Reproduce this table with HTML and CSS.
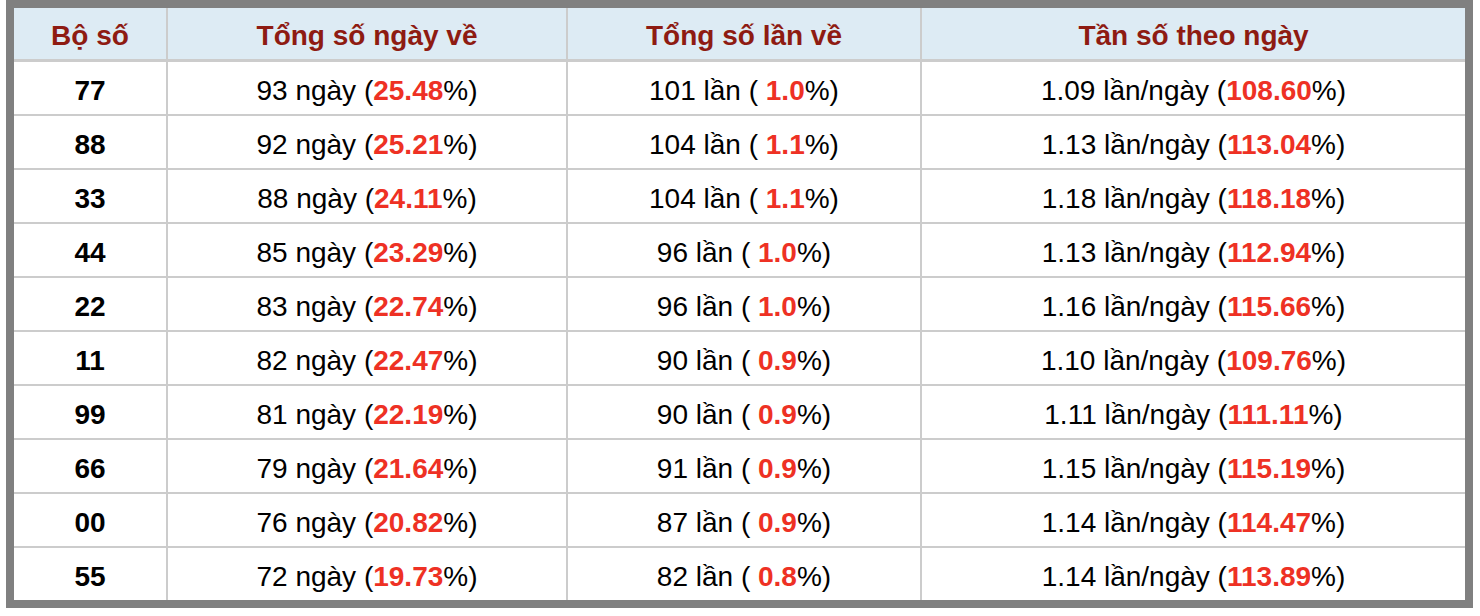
FILE: index.html
```html
<!DOCTYPE html>
<html lang="vi">
<head>
<meta charset="utf-8">
<link rel="stylesheet" href="styles.css">
</head>
<body>
<div class="frame">
  <div class="grid">
    <div class="cell head">Bộ số</div>
    <div class="cell head">Tổng số ngày về</div>
    <div class="cell head">Tổng số lần về</div>
    <div class="cell head">Tần số theo ngày</div>

    <div class="cell num">77</div>
    <div class="cell">93 ngày (<b>25.48</b>%)</div>
    <div class="cell">101 lần ( <b>1.0</b>%)</div>
    <div class="cell">1.09 lần/ngày (<b>108.60</b>%)</div>

    <div class="cell num">88</div>
    <div class="cell">92 ngày (<b>25.21</b>%)</div>
    <div class="cell">104 lần ( <b>1.1</b>%)</div>
    <div class="cell">1.13 lần/ngày (<b>113.04</b>%)</div>

    <div class="cell num">33</div>
    <div class="cell">88 ngày (<b>24.11</b>%)</div>
    <div class="cell">104 lần ( <b>1.1</b>%)</div>
    <div class="cell">1.18 lần/ngày (<b>118.18</b>%)</div>

    <div class="cell num">44</div>
    <div class="cell">85 ngày (<b>23.29</b>%)</div>
    <div class="cell">96 lần ( <b>1.0</b>%)</div>
    <div class="cell">1.13 lần/ngày (<b>112.94</b>%)</div>

    <div class="cell num">22</div>
    <div class="cell">83 ngày (<b>22.74</b>%)</div>
    <div class="cell">96 lần ( <b>1.0</b>%)</div>
    <div class="cell">1.16 lần/ngày (<b>115.66</b>%)</div>

    <div class="cell num">11</div>
    <div class="cell">82 ngày (<b>22.47</b>%)</div>
    <div class="cell">90 lần ( <b>0.9</b>%)</div>
    <div class="cell">1.10 lần/ngày (<b>109.76</b>%)</div>

    <div class="cell num">99</div>
    <div class="cell">81 ngày (<b>22.19</b>%)</div>
    <div class="cell">90 lần ( <b>0.9</b>%)</div>
    <div class="cell">1.11 lần/ngày (<b>111.11</b>%)</div>

    <div class="cell num">66</div>
    <div class="cell">79 ngày (<b>21.64</b>%)</div>
    <div class="cell">91 lần ( <b>0.9</b>%)</div>
    <div class="cell">1.15 lần/ngày (<b>115.19</b>%)</div>

    <div class="cell num">00</div>
    <div class="cell">76 ngày (<b>20.82</b>%)</div>
    <div class="cell">87 lần ( <b>0.9</b>%)</div>
    <div class="cell">1.14 lần/ngày (<b>114.47</b>%)</div>

    <div class="cell num">55</div>
    <div class="cell">72 ngày (<b>19.73</b>%)</div>
    <div class="cell">82 lần ( <b>0.8</b>%)</div>
    <div class="cell">1.14 lần/ngày (<b>113.89</b>%)</div>
  </div>
</div>
</body>
</html>
```
FILE: styles.css
```css
html, body {
  margin: 0;
  padding: 0;
  background: #ffffff;
}
body {
  padding-left: 6px;
  font-family: "Liberation Sans", Arial, sans-serif;
}
.frame {
  width: 1451px;
  border: 8px solid #808080;
}
.grid {
  display: grid;
  grid-template-columns: 152px 398px 352px 543px;
  grid-auto-rows: 52px;
  gap: 2px;
  background: #cccccc;
}
.cell {
  background: #ffffff;
  display: flex;
  align-items: center;
  justify-content: center;
  padding-top: 5px;
  box-sizing: border-box;
  font-size: 28px;
  color: #000000;
  white-space: pre;
}
.cell b {
  color: #ee3124;
  font-weight: bold;
}
.head {
  background: #ddebf4;
  color: #8e1b12;
  font-weight: bold;
  padding-top: 4px;
  margin-bottom: 1px;
}
.num {
  font-weight: bold;
}
```
